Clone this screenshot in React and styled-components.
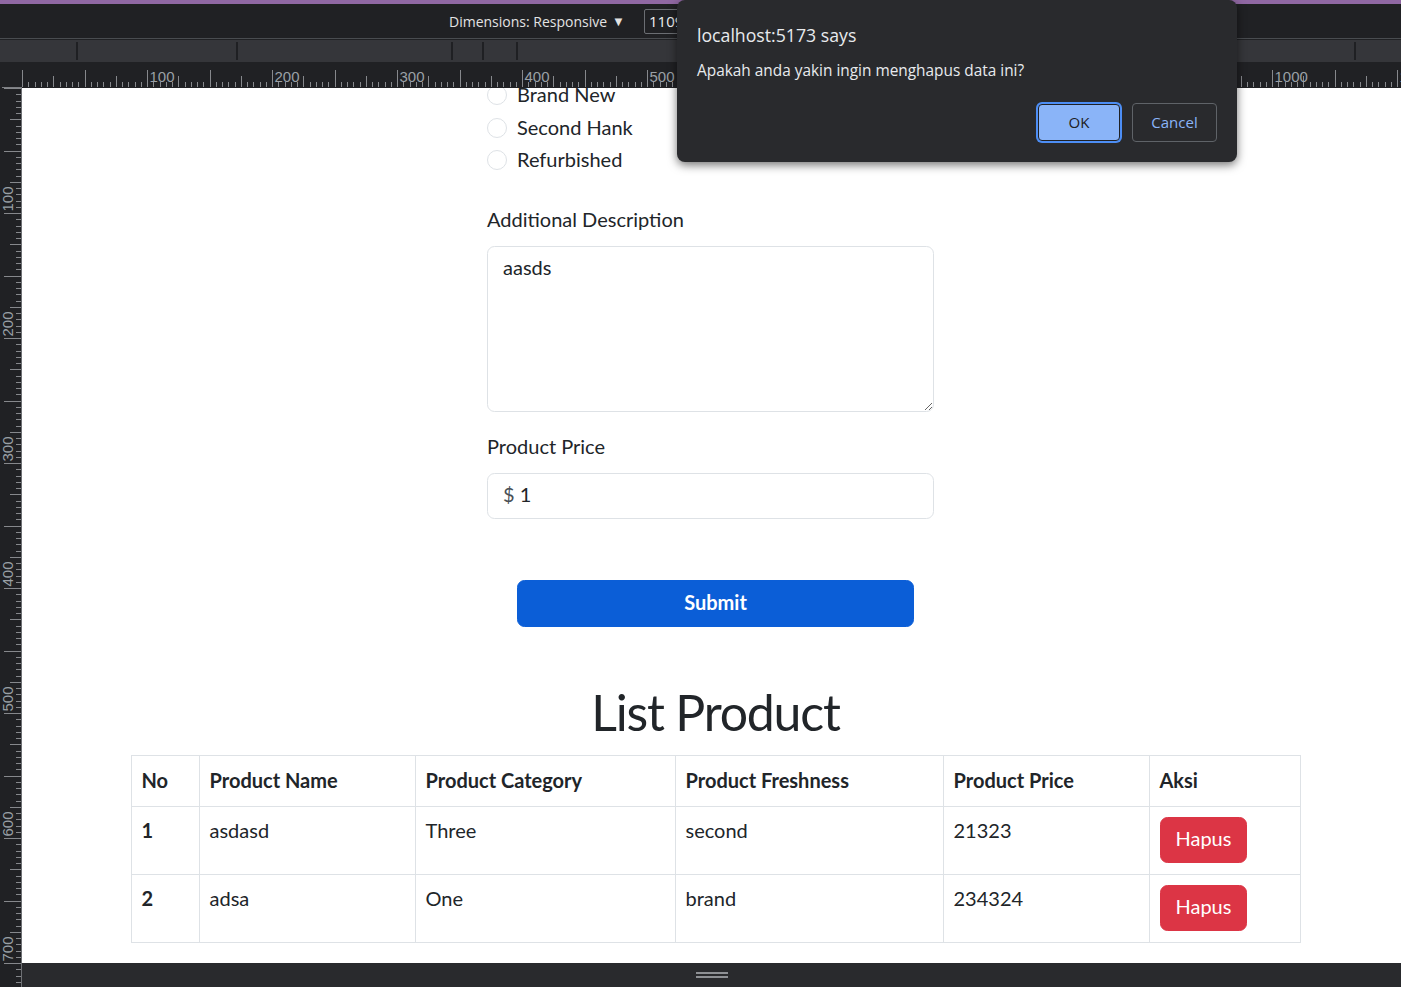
import React from "react";
import styled, { createGlobalStyle } from "styled-components";

const GlobalStyle = createGlobalStyle`
  html, body {
    margin: 0;
    padding: 0;
    overflow: hidden;
    background: #202124;
  }
  * {
    box-sizing: border-box;
  }
`;

const Frame = styled.div`
  position: relative;
  width: 1401px;
  height: 987px;
  background: #202124;
  display: grid;
  grid-template-columns: minmax(0, 1fr);
  grid-template-rows: 4px 35px 1px 22px 26px 1fr;
  overflow: hidden;
`;

const AccentStrip = styled.div`
  background: #9068a3;
`;

const Toolbar = styled.div`
  display: flex;
  align-items: center;
  gap: 19px;
  padding-left: 449px;
  border-bottom: 1px solid #494c50;
  color: #e3e3e3;
  font-family: "Open Sans", "Noto Sans", sans-serif;
  font-size: 14px;
`;

const DimensionsMenu = styled.div`
  display: flex;
  align-items: center;
  gap: 5px;
  white-space: nowrap;
`;

const Caret = styled.span`
  font-size: 13px;
  line-height: 1;
`;

const SizeInput = styled.div`
  width: 60px;
  height: 25px;
  border: 1px solid #6b6e73;
  border-radius: 2px;
  padding: 2px 4px;
  font-size: 15px;
  line-height: 19px;
  color: #f1f1f1;
`;

const MediaBar = styled.div`
  display: flex;
  align-items: center;
  background: #35363a;
  overflow: hidden;
`;

const MediaSegment = styled.div`
  flex: ${(p) => (p.$w ? `0 0 ${p.$w}px` : "1 1 0")};
  height: 100%;
`;

const MediaSeparator = styled.div`
  flex: 0 0 2px;
  height: 18px;
  background: #1f2023;
`;

const RulerRow = styled.div`
  display: grid;
  grid-template-columns: 22px minmax(0, 1fr);
  background: #202124;
  overflow: hidden;
`;

const RulerCorner = styled.div`
  border-bottom: 1px solid #7d7f83;
  margin-left: 2px;
`;

const Body = styled.div`
  display: grid;
  grid-template-columns: 22px minmax(0, 1fr);
  min-height: 0;
`;

const ViewColumn = styled.div`
  display: grid;
  grid-template-columns: minmax(0, 1fr);
  grid-template-rows: 875px 24px;
  min-height: 0;
`;

const Viewport = styled.div`
  background: #fff;
  overflow: hidden;
  font-family: Lato, "Noto Sans", sans-serif;
  font-size: 20px;
  line-height: 1.5;
  color: #212529;
`;

const BottomBar = styled.div`
  background: #292a2d;
  display: flex;
  justify-content: center;
  padding-top: 9px;
`;

const Handle = styled.div`
  width: 32px;
  height: 6px;
  border-top: 2px solid #8e9094;
  border-bottom: 2px solid #8e9094;
`;

const Page = styled.div`
  margin-top: -8px;
  padding-left: 8px;
`;

const FormColumn = styled.div`
  width: 457px;
  margin: 0 auto;
  padding-right: 10px;
`;

const RadioGroup = styled.div``;

const RadioRow = styled.label`
  display: flex;
  gap: 10px;
  height: 30px;
  margin-bottom: 2.5px;
`;

const RadioLabel = styled.span`
  line-height: 28px;
  padding-bottom: 2px;
`;

const RadioCircle = styled.span`
  flex: 0 0 20px;
  height: 20px;
  margin-top: 5px;
  border: 1px solid #dee2e6;
  border-radius: 50%;
`;

const FieldLabel = styled.div`
  margin-top: ${(p) => p.$top}px;
  margin-bottom: 12px;
  line-height: 30px;
`;

const TextArea = styled.textarea`
  display: block;
  width: 100%;
  height: 166px;
  margin: 0;
  padding: 5.5px 15px 9.5px;
  border: 1px solid #dee2e6;
  border-radius: 7.5px;
  font-family: inherit;
  font-size: 20px;
  line-height: 30px;
  color: #212529;
  resize: vertical;
  outline: none;
`;

const PriceField = styled.div`
  height: 46px;
  padding: 5px 15px 9px;
  border: 1px solid #dee2e6;
  border-radius: 7.5px;
  line-height: 30px;
  color: #212529;
`;

const Currency = styled.span`
  color: #495057;
`;

const SubmitButton = styled.button`
  display: block;
  width: 397px;
  height: 47px;
  margin: 61px auto 0;
  padding: 0 0 2px;
  border: 1px solid #0b5ed7;
  border-radius: 7.5px;
  background: #0b5ed7;
  color: #fff;
  font-family: inherit;
  font-size: 20px;
  font-weight: 700;
  line-height: 30px;
`;

const ListTitle = styled.h1`
  margin: 56px 0 12px;
  text-align: center;
  font-size: 50px;
  font-weight: 400;
  letter-spacing: -1.2px;
  line-height: 58px;
  padding-bottom: 2px;
`;

const Table = styled.table`
  width: 1169px;
  margin: 0 auto;
  border-collapse: collapse;
  table-layout: fixed;
`;

const Th = styled.th`
  width: ${(p) => p.$w}px;
  padding: 9px 10px 11px;
  border: 1px solid #dee2e6;
  text-align: left;
  vertical-align: top;
  font-weight: 700;
  line-height: 30px;
`;

const Td = styled.td`
  padding: 8px 10px 11px;
  border: 1px solid #dee2e6;
  vertical-align: top;
  line-height: 30px;
  font-weight: ${(p) => (p.$bold ? 700 : 400)};
`;

const DeleteButton = styled.button`
  display: block;
  height: 46px;
  margin-top: 2px;
  padding: 5px 15px 9px;
  border: 1px solid #dc3545;
  border-radius: 7.5px;
  background: #dc3545;
  color: #fff;
  font-family: inherit;
  font-size: 20px;
  line-height: 30px;
`;

const Dialog = styled.div`
  position: absolute;
  top: 0;
  left: 677px;
  width: 560px;
  height: 162px;
  padding: 23px 20px 19px;
  background: #292a2d;
  border-radius: 8px;
  box-shadow: 0 3px 10px rgba(0, 0, 0, 0.55);
  color: #e8eaed;
  font-family: "Open Sans", "Noto Sans", sans-serif;
`;

const DialogTitle = styled.div`
  font-size: 17.7px;
  line-height: 24px;
`;

const DialogMessage = styled.div`
  margin-top: 14px;
  font-size: 15.4px;
  line-height: 20px;
`;

const DialogActions = styled.div`
  display: flex;
  justify-content: flex-end;
  align-items: center;
  gap: 10px;
  margin-top: 21px;
  height: 41px;
`;

const DialogButton = styled.button`
  width: ${(p) => (p.$primary ? 82 : 85)}px;
  height: ${(p) => (p.$primary ? 37 : 39)}px;
  margin: ${(p) => (p.$primary ? "0 2px" : "0")};
  padding: 0 0 2px;
  border-radius: 4px;
  border: 1px solid ${(p) => (p.$primary ? "#202124" : "#5f6368")};
  background: ${(p) => (p.$primary ? "#8ab4f8" : "transparent")};
  color: ${(p) => (p.$primary ? "#202124" : "#8ab4f8")};
  box-shadow: ${(p) => (p.$primary ? "0 0 0 2px #4d8ef5" : "none")};
  font-family: inherit;
  font-size: 15px;
  font-weight: 500;
`;

const TICK = 6.25;

function HorizontalRuler() {
  const width = 1379;
  const lines = [];
  const labels = [];
  for (let i = 0; i * TICK < width; i++) {
    const x = Math.round(i * TICK) + 0.5;
    const len = i % 10 === 0 ? 18 : i % 5 === 0 ? 12 : 6;
    lines.push(<line key={i} x1={x} x2={x} y1={26 - len} y2={25} />);
    if (i % 20 === 0 && i > 0) {
      labels.push(
        <text key={i} x={x + 2} y={20}>
          {i * 5}
        </text>
      );
    }
  }
  return (
    <svg width={width} height={26} style={{ display: "block" }}>
      <g stroke="#86888c" strokeWidth="1">{lines}</g>
      <g fill="#9aa0a6" fontFamily="Liberation Sans, sans-serif" fontSize="15">
        {labels}
      </g>
    </svg>
  );
}

function VerticalRuler() {
  const height = 899;
  const lines = [];
  const labels = [];
  for (let i = 0; i * TICK < height; i++) {
    const y = Math.round(i * TICK) + 0.5;
    const len = i % 10 === 0 ? 18 : i % 5 === 0 ? 12 : 6;
    lines.push(<line key={i} x1={22 - len} x2={22} y1={y} y2={y} />);
    if (i % 20 === 0 && i > 0) {
      labels.push(
        <text key={i} transform={`translate(13 ${y - 2}) rotate(-90)`}>
          {i * 5}
        </text>
      );
    }
  }
  return (
    <svg width={22} height={height} style={{ display: "block", background: "#202124" }}>
      <g stroke="#86888c" strokeWidth="1">{lines}</g>
      <line x1="21.5" x2="21.5" y1="0" y2={height} stroke="#6d6f73" />
      <g fill="#9aa0a6" fontFamily="Liberation Sans, sans-serif" fontSize="15">
        {labels}
      </g>
    </svg>
  );
}

// separators land at x 76, 236, 451, 482, 516, 907, 941, 972, 1187, 1354
const mediaSegments = [76, 158, 213, 29, 32, 389, 32, 29, 213, 165, 0];

const freshness = ["Brand New", "Second Hank", "Refurbished"];

const products = [
  { no: 1, name: "asdasd", category: "Three", freshness: "second", price: "21323" },
  { no: 2, name: "adsa", category: "One", freshness: "brand", price: "234324" },
];

const columns = [
  { title: "No", w: 68 },
  { title: "Product Name", w: 216 },
  { title: "Product Category", w: 260 },
  { title: "Product Freshness", w: 268 },
  { title: "Product Price", w: 206 },
  { title: "Aksi", w: 151 },
];

export default function App() {
  return (
    <>
      <GlobalStyle />
      <Frame>
        <AccentStrip />
        <Toolbar>
          <DimensionsMenu>
            Dimensions: Responsive <Caret>▼</Caret>
          </DimensionsMenu>
          <SizeInput>1109</SizeInput>
        </Toolbar>
        <div />
        <MediaBar>
          {mediaSegments.map((w, i) => (
            <React.Fragment key={i}>
              <MediaSegment $w={w} />
              {i < mediaSegments.length - 1 && <MediaSeparator />}
            </React.Fragment>
          ))}
        </MediaBar>
        <RulerRow>
          <RulerCorner />
          <HorizontalRuler />
        </RulerRow>
        <Body>
          <VerticalRuler />
          <ViewColumn>
            <Viewport>
              <Page>
                <FormColumn>
                  <RadioGroup>
                    {freshness.map((f) => (
                      <RadioRow key={f}>
                        <RadioCircle />
                        <RadioLabel>{f}</RadioLabel>
                      </RadioRow>
                    ))}
                  </RadioGroup>
                  <FieldLabel $top={28.5}>Additional Description</FieldLabel>
                  <TextArea defaultValue="aasds" />
                  <FieldLabel $top={19}>Product Price</FieldLabel>
                  <PriceField>
                    <Currency>$</Currency> 1
                  </PriceField>
                </FormColumn>
                <SubmitButton>Submit</SubmitButton>
                <ListTitle>List Product</ListTitle>
                <Table>
                  <thead>
                    <tr>
                      {columns.map((c) => (
                        <Th key={c.title} $w={c.w}>
                          {c.title}
                        </Th>
                      ))}
                    </tr>
                  </thead>
                  <tbody>
                    {products.map((p) => (
                      <tr key={p.no}>
                        <Td $bold>{p.no}</Td>
                        <Td>{p.name}</Td>
                        <Td>{p.category}</Td>
                        <Td>{p.freshness}</Td>
                        <Td>{p.price}</Td>
                        <Td>
                          <DeleteButton>Hapus</DeleteButton>
                        </Td>
                      </tr>
                    ))}
                  </tbody>
                </Table>
              </Page>
            </Viewport>
            <BottomBar>
              <Handle />
            </BottomBar>
          </ViewColumn>
        </Body>
        <Dialog>
          <DialogTitle>localhost:5173 says</DialogTitle>
          <DialogMessage>Apakah anda yakin ingin menghapus data ini?</DialogMessage>
          <DialogActions>
            <DialogButton $primary>OK</DialogButton>
            <DialogButton>Cancel</DialogButton>
          </DialogActions>
        </Dialog>
      </Frame>
    </>
  );
}
